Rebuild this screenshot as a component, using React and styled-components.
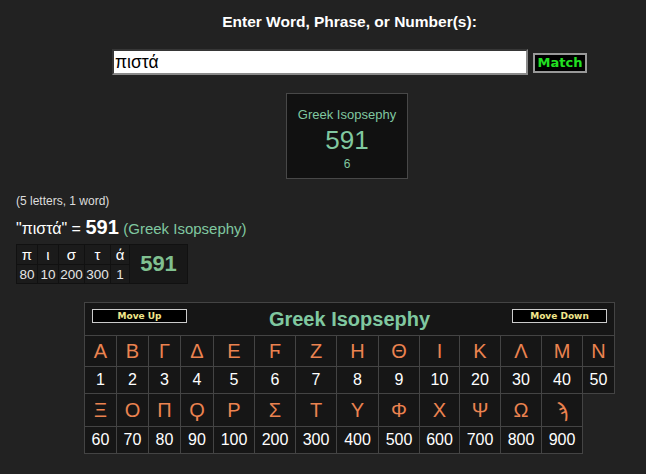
import React from 'react';
import styled, { createGlobalStyle } from 'styled-components';

const GlobalStyle = createGlobalStyle`
  body {
    margin: 0;
    background: #222;
    color: #fff;
    font-family: "Liberation Sans", Arial, sans-serif;
  }
`;

const rowOne = [['Α', 1], ['Β', 2], ['Γ', 3], ['Δ', 4], ['Ε', 5], ['Ϝ', 6], ['Ζ', 7], ['Η', 8], ['Θ', 9], ['Ι', 10], ['Κ', 20], ['Λ', 30], ['Μ', 40], ['Ν', 50]];
const rowTwo = [['Ξ', 60], ['Ο', 70], ['Π', 80], ['Ϙ', 90], ['Ρ', 100], ['Σ', 200], ['Τ', 300], ['Υ', 400], ['Φ', 500], ['Χ', 600], ['Ψ', 700], ['Ω', 800], ['ϡ', 900]];
const colWidths = [32, 32, 32, 33, 41, 41, 41, 42, 41, 40, 41, 41, 41, 32];
const breakdown = [['π', 80, 21], ['ι', 10, 21], ['σ', 200, 26], ['τ', 300, 26], ['ά', 1, 19]];

function App() {
  return (
    <Page>
      <GlobalStyle />
      <Heading>Enter Word, Phrase, or Number(s):</Heading>
      <FormRow>
        <WordInput defaultValue="πιστά" />
        <MatchButton>Match</MatchButton>
      </FormRow>
      <BoxRow>
        <ResultBox>
          <BoxTitle>Greek Isopsephy</BoxTitle>
          <BoxValue>591</BoxValue>
          <BoxCount>6</BoxCount>
        </ResultBox>
      </BoxRow>

      <Summary>
        <Count>(5 letters, 1 word)</Count>
        <Equation>
          "πιστά" = <Big>591</Big> <Cipher>(Greek Isopsephy)</Cipher>
        </Equation>
        <Breakdown>
          <tbody>
            <tr>
              {breakdown.map(([ch, , w]) => (
                <LetterCell key={ch} style={{ width: w - 1 }}>{ch}</LetterCell>
              ))}
              <TotalCell rowSpan={2}>591</TotalCell>
            </tr>
            <tr>
              {breakdown.map(([ch, n]) => (
                <NumCell key={ch}>{n}</NumCell>
              ))}
            </tr>
          </tbody>
        </Breakdown>
      </Summary>

      <TableRow>
        <CipherTable>
          <colgroup>
            {colWidths.map((w, i) => <col key={i} style={{ width: w }} />)}
          </colgroup>
          <tbody>
            <HeadRow>
              <HeadCell colSpan={14}>
                <HeadInner>
                  <MoveButton>Move Up</MoveButton>
                  <CipherTitle>Greek Isopsephy</CipherTitle>
                  <MoveButton>Move Down</MoveButton>
                </HeadInner>
              </HeadCell>
            </HeadRow>
            <GlyphRow $h={31}>
              {rowOne.map(([g]) => <Glyph key={g}>{g}</Glyph>)}
            </GlyphRow>
            <ValueRow>
              {rowOne.map(([g, v]) => <Value key={g}>{v}</Value>)}
            </ValueRow>
            <GlyphRow $h={33}>
              {rowTwo.map(([g]) => <Glyph key={g}>{g}</Glyph>)}
            </GlyphRow>
            <ValueRow>
              {rowTwo.map(([g, v]) => <Value key={g}>{v}</Value>)}
            </ValueRow>
          </tbody>
        </CipherTable>
      </TableRow>
    </Page>
  );
}

export default App;

const Page = styled.div`
  padding-top: 12px;
`;

const Heading = styled.div`
  padding-left: 53px;
  text-align: center;
  font-size: 15.5px;
  font-weight: bold;
  line-height: 19px;
`;

const FormRow = styled.div`
  padding-left: 53px;
  margin-top: 18px;
  display: flex;
  justify-content: center;
  align-items: center;
  gap: 5px;
`;

const WordInput = styled.input`
  box-sizing: border-box;
  width: 416px;
  height: 26px;
  border: 2px inset #8a8a8a;
  padding: 0 1px;
  background: #fff;
  color: #000;
  font-family: "Liberation Sans", Arial, sans-serif;
  font-size: 17.5px;
  outline: none;
`;

const MatchButton = styled.button`
  box-sizing: border-box;
  width: 54px;
  height: 20px;
  margin-top: 2px;
  padding: 0;
  background: #000;
  border: 2px solid #999;
  color: #22e022;
  font-family: "DejaVu Sans", Verdana, sans-serif;
  font-weight: bold;
  font-size: 13px;
  line-height: 14px;
`;

const BoxRow = styled.div`
  padding-left: 48px;
  margin-top: 18px;
  display: flex;
  justify-content: center;
`;

const ResultBox = styled.div`
  box-sizing: border-box;
  width: 122px;
  height: 86px;
  border: 1px solid #484848;
  background: #111;
  padding-top: 13px;
  text-align: center;
  color: #80c8a0;
`;

const BoxTitle = styled.div`
  font-size: 13px;
  line-height: 15px;
`;

const BoxValue = styled.div`
  margin-top: 3px;
  font-size: 26px;
  line-height: 30px;
`;

const BoxCount = styled.div`
  margin-top: 2px;
  font-size: 12px;
  line-height: 14px;
`;

const Summary = styled.div`
  padding-left: 16px;
  margin-top: 15px;
`;

const Count = styled.div`
  font-size: 12px;
  line-height: 14px;
  color: #ddd;
`;

const Equation = styled.div`
  margin-top: 7px;
  font-size: 16px;
  line-height: 24px;
`;

const Big = styled.span`
  font-size: 20px;
  font-weight: bold;
`;

const Cipher = styled.span`
  font-size: 15px;
  color: #80c8a0;
`;

const Breakdown = styled.table`
  margin-top: 3px;
  border-collapse: separate;
  border-spacing: 1px;
  background: #111;
`;

const LetterCell = styled.td`
  height: 19px;
  padding: 0;
  background: #1b1b1b;
  text-align: center;
  font-size: 15px;
  line-height: 17px;
  color: #fff;
`;

const NumCell = styled.td`
  height: 18px;
  padding: 0;
  background: #1b1b1b;
  text-align: center;
  font-size: 13.5px;
  line-height: 15px;
  color: #e6e6e6;
`;

const TotalCell = styled.td`
  width: 57px;
  padding: 0;
  background: #181818;
  text-align: center;
  font-size: 22px;
  font-weight: bold;
  color: #80c090;
`;

const TableRow = styled.div`
  margin-top: 18px;
  padding-left: 84px;
`;

const CipherTable = styled.table`
  width: 531px;
  table-layout: fixed;
  border-collapse: collapse;
`;

const HeadRow = styled.tr`
  height: 33px;
`;

const HeadCell = styled.td`
  padding: 0;
  border: 1px solid #444;
  background: #161616;
  vertical-align: top;
`;

const HeadInner = styled.div`
  display: flex;
  justify-content: space-between;
  align-items: flex-start;
  padding: 5px 7px 0 7px;
`;

const MoveButton = styled.button`
  box-sizing: border-box;
  width: 95px;
  height: 14px;
  margin-top: 1px;
  padding: 0;
  background: #000;
  border: 1px solid #ccc;
  color: #f0e68c;
  font-family: "DejaVu Sans", Verdana, sans-serif;
  font-weight: bold;
  font-size: 9px;
  line-height: 12px;
`;

const CipherTitle = styled.div`
  font-size: 20px;
  font-weight: bold;
  line-height: 23px;
  color: #80c8a0;
`;

const GlyphRow = styled.tr`
  height: ${p => p.$h}px;
`;

const Glyph = styled.td`
  padding: 0;
  border: 1px solid #444;
  background: #161616;
  text-align: center;
  font-size: 20px;
  color: #eb8350;
`;

const ValueRow = styled.tr`
  height: 27px;
`;

const Value = styled.td`
  padding: 0;
  border: 1px solid #444;
  background: #161616;
  text-align: center;
  font-size: 16px;
  color: #fff;
`;
